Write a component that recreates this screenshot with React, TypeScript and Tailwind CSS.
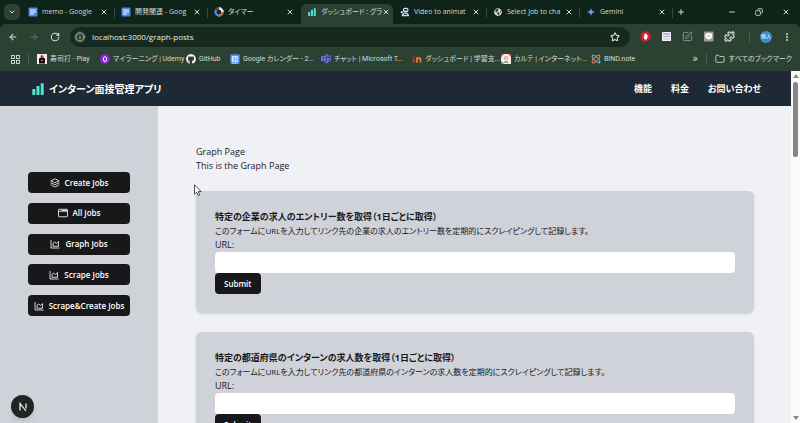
import type { ReactNode } from 'react';
import {
  ArrowLeft,
  ArrowRight,
  ChevronDown,
  Copy,
  EllipsisVertical,
  Folder,
  Info,
  Minus,
  Plus,
  Puzzle,
  RotateCw,
  SquarePen,
  Star,
  X,
} from 'lucide-react';
import { FaGithub, FaGlobeAmericas } from 'react-icons/fa';
import { BsMicrosoftTeams } from 'react-icons/bs';

function DocsIcon() {
  return (
    <svg viewBox="0 0 10 10" className="size-2.5">
      <rect x="0.5" y="0.5" width="9" height="9" rx="1" fill="#4a86e8" />
      <path d="M2 3h6M2 5h6M2 7h4" stroke="#fff" strokeWidth="1" />
    </svg>
  );
}

function TimerIcon() {
  return (
    <svg viewBox="0 0 10 10" className="size-2.5" fill="none" strokeWidth="2.4">
      <circle cx="5" cy="5" r="3.5" stroke="#4a8be8" />
      <path d="M5 1.5A3.5 3.5 0 0 1 8.5 5" stroke="#f3e6dc" />
      <path d="M8.5 5A3.5 3.5 0 0 1 5 8.5" stroke="#c0672f" />
      <path d="M1.9 3.3A3.5 3.5 0 0 1 5 1.5" stroke="#6b4630" />
    </svg>
  );
}

function BarsIcon({ className }: { className: string }) {
  return (
    <svg viewBox="0 0 12 12" className={className} fill="#4ee6cf">
      <rect x="0.3" y="6" width="3" height="6" rx="0.4" />
      <rect x="4.5" y="3" width="3" height="9" rx="0.4" />
      <rect x="8.7" y="0.3" width="3" height="11.7" rx="0.4" />
    </svg>
  );
}

function RobotIcon() {
  return (
    <svg viewBox="0 0 10 10" className="size-2.5">
      <rect x="3" y="0.8" width="5.4" height="4.4" rx="1.6" fill="#dfe3f5" />
      <rect x="4" y="2.1" width="3.6" height="1.7" rx="0.8" fill="#25305e" />
      <path d="M1.600 9.200c0-3 2-3.600 3.800-3.600s3.600.6 3.600 3.600z" fill="#c6cde9" />
      <path d="M3.6 7.4h3.4" stroke="#3a4679" strokeWidth="1.2" />
      <circle cx="1.8" cy="5.2" r="1.1" fill="#dfe3f5" />
    </svg>
  );
}

function GeminiIcon() {
  return (
    <svg viewBox="0 0 10 10" className="size-2.5">
      <path d="M5 .8C5.3 3.4 6.6 4.7 9.2 5 6.6 5.3 5.3 6.6 5 9.2 4.7 6.6 3.4 5.3.8 5 3.4 4.7 4.7 3.4 5 .8z" fill="#6b9cf5" />
    </svg>
  );
}

function SushiIcon() {
  return (
    <svg viewBox="0 0 10 10" className="size-2.5">
      <rect width="10" height="10" fill="#f4efef" />
      <path d="M2 4.5Q5 2.5 8 4.5V9.5H2z" fill="#18090b" />
      <circle cx="5" cy="2.4" r="1.5" fill="#c92a3b" />
      <path d="M4 6.6h2" stroke="#e8d9d9" strokeWidth="0.7" />
    </svg>
  );
}

function UdemyIcon() {
  return (
    <svg viewBox="0 0 10 10" className="size-2.5">
      <circle cx="5" cy="5" r="5" fill="#8a22d6" />
      <path d="M3.5 4v2a1.5 1.5 0 0 0 3 0V4M3.4 3.6 5 2.6l1.6 1" stroke="#fff" strokeWidth="1" fill="none" />
    </svg>
  );
}

function CalendarIcon() {
  return (
    <svg viewBox="0 0 10 10" className="size-2.5">
      <rect x="0.3" y="0.3" width="9.4" height="9.4" rx="1" fill="#4b8df0" />
      <rect x="1.8" y="2.2" width="6.4" height="5.6" fill="#e9f1ff" />
      <path d="M3 3.7h1.4v2.6H3M5.8 3.7H7v2.6H5.6" stroke="#3f7ee0" strokeWidth="0.8" fill="none" />
      <path d="M2 9.2h6" stroke="#d8e7ff" strokeWidth="0.8" />
    </svg>
  );
}

function InIcon() {
  return (
    <svg viewBox="0 0 10 10" className="size-2.5" fill="none" strokeWidth="1.8">
      <path d="M1.8 4v4.5M1.8 1.6v1.4" stroke="#c5392c" />
      <path d="M4.900 8.500V3.600M4.900 5.200c.4-1.600 3.600-1.800 3.600.6v2.700" stroke="#f0783c" />
    </svg>
  );
}

function KarteIcon() {
  return (
    <svg viewBox="0 0 10 10" className="size-2.5">
      <rect width="10" height="10" fill="#f5ece6" />
      <path d="M0 3.5 3 0H0zM10 3 7 0h3zM0 10V7l3 3z" fill="#d8584a" />
      <circle cx="5" cy="4.2" r="2" fill="#e08b6b" />
      <path d="M2.5 9c0-2.6 5-2.6 5 0z" fill="#8fae83" />
      <circle cx="5" cy="4.6" r="1" fill="#fff" />
    </svg>
  );
}

function BindIcon() {
  return (
    <svg viewBox="0 0 10 10" className="size-2.5" fill="none" strokeWidth="1.2">
      <ellipse cx="5" cy="5" rx="5" ry="2" transform="rotate(45 5 5)" stroke="#4fa4e0" />
      <ellipse cx="5" cy="5" rx="5" ry="2" transform="rotate(-45 5 5)" stroke="#e07a5a" />
      <circle cx="1.6" cy="1.8" r="0.8" fill="#6fc07a" />
      <circle cx="8.4" cy="8.2" r="0.8" fill="#e8d25a" />
    </svg>
  );
}

function LayersIcon() {
  return (
    <svg viewBox="0 0 20 20" className="size-2.5 shrink-0" fill="none" stroke="currentColor" strokeWidth="1.5" strokeLinejoin="round">
      <path d="M10 1.5 18 5.5 10 9.5 2 5.5z" />
      <path d="m2 9.5 8 4 8-4" />
      <path d="m2 14 8 4 8-4" />
      <path d="M2 5.5V14M18 5.5V14" strokeWidth="0.8" />
    </svg>
  );
}

function WindowIcon() {
  return (
    <svg viewBox="0 0 20 20" className="size-2.5 shrink-0" fill="none" stroke="currentColor" strokeWidth="1.6">
      <rect x="1" y="2.5" width="18" height="15" rx="1" />
      <path d="M1 6.5h18" />
      <path d="M7 4.5h11" strokeWidth="2" />
    </svg>
  );
}

function GraphIcon() {
  return (
    <svg viewBox="0 0 20 20" className="size-2.5 shrink-0" fill="none" stroke="currentColor" strokeWidth="1.6" strokeLinejoin="round">
      <path d="M2 2v16h17" />
      <path d="M6 14.5V8.5L9.5 6 13 9l4-4v9.5z" />
    </svg>
  );
}

interface Tab {
  title: string;
  icon: ReactNode;
  active?: boolean;
  divider?: boolean;
}

const tabs: Tab[] = [
  { title: 'memo - Google', icon: <DocsIcon />, divider: true },
  { title: '開発関連 - Goog', icon: <DocsIcon />, divider: true },
  { title: 'タイマー', icon: <TimerIcon /> },
  { title: 'ダッシュボード : グラ', icon: <BarsIcon className="size-2" />, active: true },
  { title: 'Video to animat', icon: <RobotIcon />, divider: true },
  { title: 'Select job to cha', icon: <FaGlobeAmericas className="size-2 text-[#d5dad6]" />, divider: true },
  { title: 'Gemini', icon: <GeminiIcon />, divider: true },
];

const bookmarks = [
  { label: '寿司打 - Play', icon: <SushiIcon />, width: 'w-[63px]' },
  { label: 'マイラーニング | Udemy', icon: <UdemyIcon />, width: 'w-[86px]' },
  { label: 'GitHub', icon: <FaGithub className="size-2.5 text-white" />, width: 'w-11' },
  { label: 'Google カレンダー - 2...', icon: <CalendarIcon />, width: 'w-[91px]' },
  { label: 'チャット | Microsoft T...', icon: <BsMicrosoftTeams className="size-2.5 text-[#6470d8]" />, width: 'w-[91px]' },
  { label: 'ダッシュボード | 学習支...', icon: <InIcon />, width: 'w-[89px]' },
  { label: 'カルテ | インターネット...', icon: <KarteIcon />, width: 'w-[90px]' },
  { label: 'BIND.note', icon: <BindIcon />, width: 'w-12' },
];

const menu = [
  { label: 'Create Jobs', icon: <LayersIcon /> },
  { label: 'All Jobs', icon: <WindowIcon /> },
  { label: 'Graph Jobs', icon: <GraphIcon /> },
  { label: 'Scrape Jobs', icon: <GraphIcon /> },
  { label: 'Scrape&Create Jobs', icon: <GraphIcon /> },
];

const forms = [
  {
    id: 'company-url',
    title: '特定の企業の求人のエントリー数を取得（1日ごとに取得）',
    description: 'このフォームにURLを入力してリンク先の企業の求人のエントリー数を定期的にスクレイピングして記録します。',
  },
  {
    id: 'prefecture-url',
    title: '特定の都道府県のインターンの求人数を取得（1日ごとに取得）',
    description: 'このフォームにURLを入力してリンク先の都道府県のインターンの求人数を定期的にスクレイピングして記録します。',
  },
];

function TabStrip() {
  return (
    <div className="flex h-6 items-end text-[#d3dcd5]">
      <button aria-label="Search tabs" className="mb-1 ml-1 mr-0.5 flex size-4 shrink-0 items-center justify-center rounded-[5px] bg-[#2b4233]">
        <ChevronDown className="size-2" strokeWidth={3} />
      </button>
      <div role="tablist" className="flex h-full min-w-0 flex-1 items-end">
        {tabs.map((tab) => (
          <div key={tab.title} className="flex w-[93px] items-start">
            <div
              role="tab"
              aria-selected={!!tab.active}
              className={
                'flex h-5 min-w-0 flex-1 items-center pb-1 pl-1.5 ' +
                (tab.active ? 'rounded-t-md bg-[#2b4233]' : '')
              }
            >
              <span className="flex size-2.5 shrink-0 items-center justify-center">{tab.icon}</span>
              <span className="ml-1 flex-1 whitespace-nowrap text-[7px] leading-3">{tab.title}</span>
              <button aria-label="Close tab" className="mr-1.5 shrink-0">
                <X className="size-2" strokeWidth={3} />
              </button>
            </div>
            <span className={'mt-1 h-2.5 w-px ' + (tab.divider ? 'bg-[#34493c]' : '')} />
          </div>
        ))}
        <button aria-label="New tab" className="mb-2 ml-1">
          <Plus className="size-2" strokeWidth={3} />
        </button>
      </div>
      <div className="mb-2 mr-2.5 flex shrink-0 items-center gap-[19px]">
        <button aria-label="Minimize"><Minus className="size-2" strokeWidth={3} /></button>
        <button aria-label="Restore"><Copy className="size-2 -scale-x-100" strokeWidth={2.5} /></button>
        <button aria-label="Close"><X className="size-2" strokeWidth={3} /></button>
      </div>
    </div>
  );
}

function Toolbar() {
  return (
    <div className="flex h-[25px] items-center rounded-t-md bg-[#2b4233] px-2 text-[#d3dcd5]">
      <button aria-label="Back"><ArrowLeft className="size-2.5" strokeWidth={2.5} /></button>
      <button aria-label="Forward" className="ml-[11px] text-[#71837a]"><ArrowRight className="size-2.5" /></button>
      <button aria-label="Reload" className="ml-[11px]"><RotateCw className="size-2.5" strokeWidth={2.5} /></button>
      <div className="ml-2.5 flex h-5 flex-1 items-center rounded-full bg-[#17291e] pl-1">
        <Info className="size-3 shrink-0 rounded-full bg-[#2b4233] p-px" />
        <input
          aria-label="Address"
          defaultValue="localhost:3000/graph-posts"
          className="ml-1.5 min-w-0 flex-1 bg-transparent text-[8px] leading-3 text-[#e6ece7] outline-none"
        />
        <button aria-label="Bookmark" className="mr-2.5"><Star className="size-2.5" strokeWidth={2.5} /></button>
      </div>
      <div className="ml-2.5 flex items-center gap-2.5">
        <button aria-label="Ad blocker">
          <svg viewBox="0 0 11 11" className="size-[11px]">
            <path d="M3.4.5h4.2l2.9 2.9v4.2l-2.9 2.9H3.4L.5 7.6V3.4z" fill="#d21f35" />
            <path d="M3.5 5.5h.8V3h.8v-.5h.8V3h.8v1h.8v2.8L6.5 8.5h-2z" fill="#fff" />
          </svg>
        </button>
        <button aria-label="Calendar extension">
          <svg viewBox="0 0 11 11" className="size-[11px]">
            <rect x="1" y="1" width="9" height="9" rx="0.5" fill="#f1f1f4" />
            <path d="M2 3h3" stroke="#d0606c" />
            <path d="M5 3h4" stroke="#6a86c8" />
            <path d="M2 5.500h7" stroke="#a9b2cf" />
            <path d="M2.5 8h6" stroke="#e0b8bc" />
          </svg>
        </button>
        <button aria-label="Notes" className="text-[#8f9c94]"><SquarePen className="size-[11px]" /></button>
        <button aria-label="Chat">
          <svg viewBox="0 0 11 11" className="size-[11px]">
            <rect x="1" y="0.5" width="9.5" height="10" rx="1" fill="#9c9ea0" />
            <ellipse cx="5.7" cy="5" rx="3.6" ry="2.9" fill="#fff" />
            <path d="M5 7.5v1.7L7.5 7z" fill="#fff" />
            <path d="M3.7 5h4" stroke="#9c9ea0" strokeWidth="0.8" />
          </svg>
        </button>
        <button aria-label="Extensions"><Puzzle className="size-[11px]" strokeWidth={2.5} /></button>
        <span className="ml-1 h-2.5 w-px bg-[#4a6254]" />
        <button className="flex size-3 items-center justify-center rounded-full bg-[#3d8ccc] text-[5px] leading-none text-white">悠人</button>
        <button aria-label="Menu"><EllipsisVertical className="size-2.5" strokeWidth={3} /></button>
      </div>
    </div>
  );
}

function BookmarkBar() {
  return (
    <div className="flex h-[22px] items-center whitespace-nowrap bg-[#2b4233] pb-0.5 pl-[11px] pr-2 font-['Roboto','Noto_Sans_CJK_JP',sans-serif] text-[7px] leading-3 text-[#d3dcd5]">
      <button aria-label="Apps">
        <svg viewBox="0 0 9 9" className="size-[9px]" fill="none" stroke="currentColor" strokeWidth="0.9">
          <rect x="0.5" y="0.5" width="3" height="3" />
          <rect x="5.5" y="0.5" width="3" height="3" />
          <rect x="0.5" y="5.5" width="3" height="3" />
          <rect x="5.5" y="5.5" width="3" height="3" />
        </svg>
      </button>
      <span className="mx-2 h-2.5 w-px bg-[#4a6254]" />
      <div className="flex min-w-0 flex-1">
        {bookmarks.map((item) => (
          <a key={item.label} href="#" className={'flex shrink-0 items-center gap-[3px] ' + item.width}>
            <span className="shrink-0">{item.icon}</span>
            {item.label}
          </a>
        ))}
      </div>
      <button aria-label="More bookmarks" className="text-[11px]">»</button>
      <span className="mx-2 h-2.5 w-px bg-[#4a6254]" />
      <a href="#" className="flex items-center gap-1">
        <Folder className="size-2.5" />
        すべてのブックマーク
      </a>
    </div>
  );
}

function AppHeader() {
  return (
    <header className="flex h-[35px] shrink-0 items-center justify-between bg-[#1f2835] pl-8 pr-[30px] text-white">
      <a href="#" className="flex items-center gap-[5px] text-[10px] font-bold leading-4">
        <BarsIcon className="size-3" />
        インターン面接管理アプリ
      </a>
      <nav className="flex gap-[19px] text-[9px] font-bold leading-[14px]">
        <a href="#">機能</a>
        <a href="#">料金</a>
        <a href="#">お問い合わせ</a>
      </nav>
    </header>
  );
}

function Sidebar() {
  return (
    <aside className="w-[158px] shrink-0 bg-[#d0d2da] px-7 pt-[66px]">
      <div className="flex h-36 flex-col justify-between">
        {menu.map((item) => (
          <button
            key={item.label}
            className="flex h-[21px] items-center justify-center gap-[5px] whitespace-nowrap rounded bg-[#18181b] text-[8px] font-semibold leading-3 text-white"
          >
            {item.icon}
            {item.label}
          </button>
        ))}
      </div>
    </aside>
  );
}

function ScrapeForm({ id, title, description }: { id: string; title: string; description: string }) {
  return (
    <form onSubmit={(e) => e.preventDefault()} className="rounded-md bg-[#d0d2da] p-[19px] shadow">
      <h2 className="font-bold">{title}</h2>
      <p className="text-[8px] leading-[14px]">{description}</p>
      <label htmlFor={id} className="block">URL:</label>
      <input id={id} type="text" className="block h-[21px] w-full rounded bg-white px-2 outline-none" />
      <button type="submit" className="block h-[21px] rounded bg-[#18181b] px-[9px] text-[8px] font-semibold text-white">
        Submit
      </button>
    </form>
  );
}

export default function App() {
  return (
    <div className="flex h-screen flex-col overflow-hidden bg-[#0e2418] font-['Open_Sans','Noto_Sans_CJK_JP',sans-serif] [font-feature-settings:'palt']">
      <TabStrip />
      <Toolbar />
      <BookmarkBar />
      <div className="flex min-h-0 flex-1">
        <div className="relative flex min-w-0 flex-1 flex-col">
          <AppHeader />
          <div className="flex min-h-0 flex-1 overflow-hidden">
            <Sidebar />
            <main className="min-w-0 flex-1 bg-[#f0f1f5] pl-[38px] pr-[37px] pt-[39px] text-[9px] leading-[14px] text-[#18181b]">
              <h1>Graph Page</h1>
              <p>This is the Graph Page</p>
              <div className="mt-[18px] flex flex-col gap-[19px]">
                {forms.map((form) => (
                  <ScrapeForm key={form.id} {...form} />
                ))}
              </div>
            </main>
          </div>
          <button
            aria-label="Open Next.js Dev Tools"
            className="absolute bottom-[5px] left-[11px] flex size-[23px] items-center justify-center rounded-full bg-[#202423] text-white shadow-md"
          >
            <svg viewBox="0 0 10 10" className="size-2.5" fill="none" stroke="currentColor" strokeWidth="1.2">
              <path d="M2 8.5v-7L8 9M8 1.5v5" />
            </svg>
          </button>
          <svg viewBox="0 0 8 12" className="absolute left-[194px] top-[113px] h-3 w-2">
            <path d="M.5.8v9.4l2.2-2 1.5 3.3 1.5-.7-1.5-3.2h3z" fill="#fff" stroke="#222" strokeWidth="0.8" />
          </svg>
        </div>
        <div className="flex w-[9px] shrink-0 flex-col items-center justify-between bg-[#fafafa] py-[3px] text-[#858585]">
          <div className="flex flex-col items-center gap-1">
            <svg viewBox="0 0 6 4" className="h-1 w-1.5" fill="currentColor"><path d="M3 0l3 4H0z" /></svg>
            <div className="h-[75px] w-[5px] rounded-full bg-[#858585]" />
          </div>
          <svg viewBox="0 0 6 4" className="h-1 w-1.5" fill="currentColor"><path d="M3 4l3-4H0z" /></svg>
        </div>
      </div>
    </div>
  );
}
